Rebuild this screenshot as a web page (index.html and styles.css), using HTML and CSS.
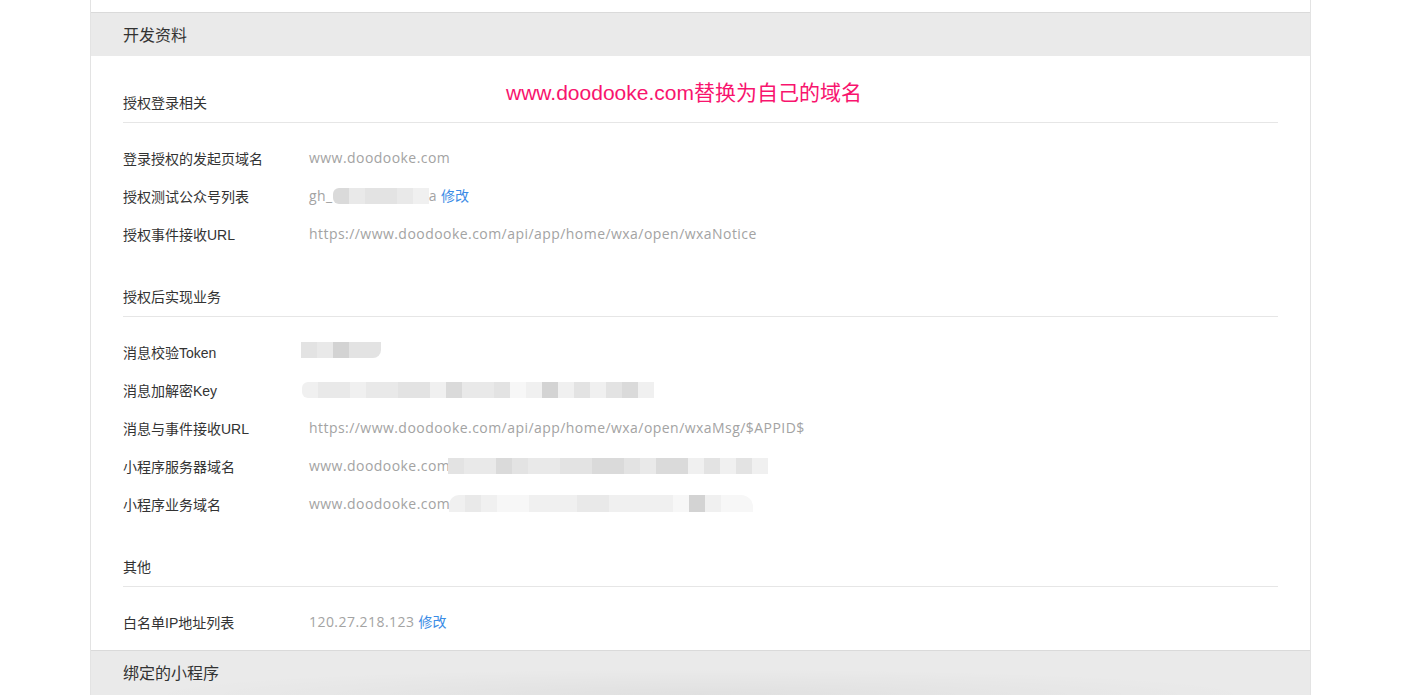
FILE: index.html
```html
<!DOCTYPE html>
<html lang="zh-CN">
<head>
<meta charset="utf-8">
<title>开发资料</title>
<link rel="stylesheet" href="styles.css">
</head>
<body>
<div class="panel">
  <div class="panel-head">开发资料</div>
  <div class="panel-body">
    <div class="note">www.doodooke.com替换为自己的域名</div>

    <div class="group">
      <div class="group-title">授权登录相关</div>
      <div class="rows">
        <div class="row"><div class="label">登录授权的发起页域名</div><div class="value">www.doodooke.com</div></div>
        <div class="row"><div class="label">授权测试公众号列表</div><div class="value">gh_<span class="mosaic m-gh"><i class="c4"></i><i class="c2"></i><i class="c3"></i><i class="c3"></i><i class="c2"></i><i class="c1"></i></span>a <a class="link" href="#">修改</a></div></div>
        <div class="row"><div class="label">授权事件接收URL</div><div class="value">https://www.doodooke.com/api/app/home/wxa/open/wxaNotice</div></div>
      </div>
    </div>

    <div class="group">
      <div class="group-title">授权后实现业务</div>
      <div class="rows">
        <div class="row"><div class="label">消息校验Token</div><div class="value"><span class="mosaic m-token"><i class="c3"></i><i class="c2"></i><i class="c5"></i><i class="c3"></i><i class="c3 br"></i></span></div></div>
        <div class="row"><div class="label">消息加解密Key</div><div class="value"><span class="mosaic m-key"><i class="c1 bl"></i><i class="c2"></i><i class="c2"></i><i class="c1"></i><i class="c2"></i><i class="c2"></i><i class="c3"></i><i class="c3"></i><i class="c1"></i><i class="c4"></i><i class="c2"></i><i class="c2"></i><i class="c3"></i><i class="c0"></i><i class="c1"></i><i class="c5"></i><i class="c1"></i><i class="c3"></i><i class="c1"></i><i class="c3"></i><i class="c4"></i><i class="c1"></i></span></div></div>
        <div class="row"><div class="label">消息与事件接收URL</div><div class="value">https://www.doodooke.com/api/app/home/wxa/open/wxaMsg/$APPID$</div></div>
        <div class="row"><div class="label">小程序服务器域名</div><div class="value">www.doodooke.com<span class="mosaic m-dom"><i class="c3"></i><i class="c2"></i><i class="c2"></i><i class="c4"></i><i class="c3"></i><i class="c2"></i><i class="c2"></i><i class="c3"></i><i class="c3"></i><i class="c4"></i><i class="c4"></i><i class="c3"></i><i class="c2"></i><i class="c4"></i><i class="c4"></i><i class="c1"></i><i class="c3"></i><i class="c1"></i><i class="c3"></i><i class="c1"></i></span></div></div>
        <div class="row"><div class="label">小程序业务域名</div><div class="value">www.doodooke.com<span class="mosaic m-dom2"><i class="c1 tl"></i><i class="c2"></i><i class="c1"></i><i class="c0"></i><i class="c0"></i><i class="c1"></i><i class="c1"></i><i class="c1"></i><i class="c2"></i><i class="c2"></i><i class="c1"></i><i class="c1"></i><i class="c1"></i><i class="c1"></i><i class="c0"></i><i class="c5"></i><i class="c1"></i><i class="c0"></i><i class="c0 tr"></i></span></div></div>
      </div>
    </div>

    <div class="group">
      <div class="group-title">其他</div>
      <div class="rows">
        <div class="row"><div class="label">白名单IP地址列表</div><div class="value">120.27.218.123 <a class="link" href="#">修改</a></div></div>
      </div>
    </div>
  </div>
  <div class="panel-head panel-head-bottom">绑定的小程序</div>
</div>
</body>
</html>
```

FILE: styles.css
```css
html, body {
  margin: 0;
  padding: 0;
  background: #ffffff;
}

body {
  font-family: "Liberation Sans", "Noto Sans CJK SC", sans-serif;
  color: #333333;
  height: 697px;
  overflow: hidden;
}

.panel {
  margin-left: 90px;
  width: 1219px;
  border-left: 1px solid #e3e3e3;
  border-right: 1px solid #e3e3e3;
  padding-top: 12px;
}

.panel-head {
  height: 43px;
  line-height: 45px;
  padding-left: 32px;
  background: #eaeaea;
  border-top: 1px solid #dadada;
  font-size: 16px;
  color: #333333;
}

.panel-head-bottom {
  height: 44px;
  line-height: 45px;
  background: radial-gradient(ellipse 46% 60% at 50% 100%, rgba(0, 0, 0, 0.045), rgba(0, 0, 0, 0) 100%), #eaeaea;
}

.panel-body {
  position: relative;
  padding: 0 32px 9px 32px;
}

.note {
  position: absolute;
  left: 415px;
  top: 22px;
  font-size: 21px;
  line-height: 30px;
  color: #f8146e;
  white-space: nowrap;
}

.group {
  padding-top: 34px;
}

.note + .group {
  padding-top: 37px;
}

.group-title {
  font-size: 14px;
  line-height: 20px;
  padding-bottom: 9px;
  border-bottom: 1px solid #e6e6e6;
  color: #333333;
}

.rows {
  padding-top: 16px;
}

.row {
  display: flex;
  align-items: center;
  height: 38px;
  font-size: 14px;
}

.label {
  width: 186px;
  flex: 0 0 186px;
  color: #333333;
}

.value {
  display: flex;
  align-items: center;
  font-family: "Open Sans", "Noto Sans CJK SC", sans-serif;
  letter-spacing: 0.45px;
  color: #a3a3a3;
  white-space: nowrap;
  line-height: 20px;
}

.link {
  color: #3b8ce6;
  text-decoration: none;
  letter-spacing: 0;
  margin-left: 4px;
}

.mosaic {
  display: inline-flex;
  height: 16px;
  filter: blur(0.5px);
}

.mosaic i {
  display: block;
  width: 16px;
  height: 16px;
}

.m-gh i:first-child {
  border-radius: 6px 0 0 6px;
}

.m-token {
  margin-left: -8px;
  margin-top: -4px;
}

.m-key {
  margin-left: -7px;
}

.m-dom {
  margin-left: -2px;
}

.m-dom2 {
  height: 17px;
  margin-top: -2px;
  margin-left: -1px;
}

.m-dom2 i {
  height: 17px;
}

.c0 { background: #f7f7f7; }
.c1 { background: #f0f0f0; }
.c2 { background: #e9e9e9; }
.c3 { background: #e3e3e3; }
.c4 { background: #dadada; }
.c5 { background: #d3d3d3; }

.br { border-bottom-right-radius: 8px; }
.bl { border-radius: 6px 0 0 6px; }
.tl { border-top-left-radius: 10px; }
.tr { border-top-right-radius: 12px; }
```
